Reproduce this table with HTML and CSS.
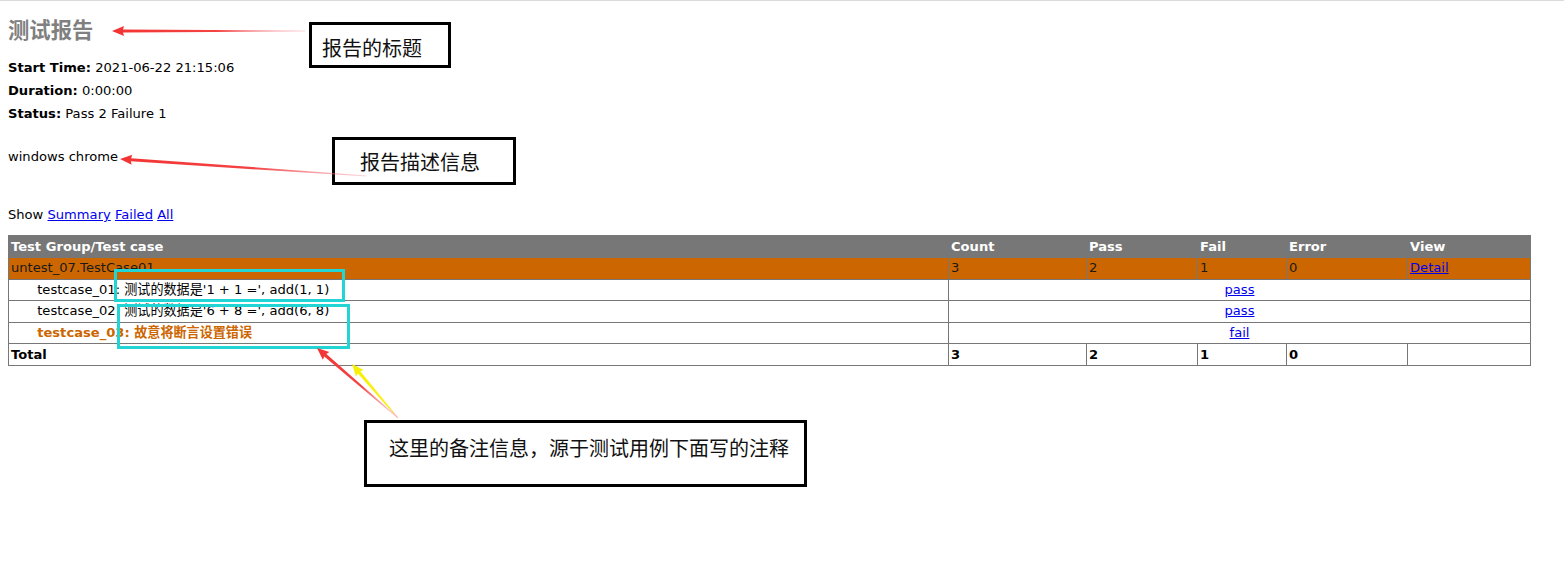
FILE: index.html
```html
<!DOCTYPE html>
<html lang="zh-CN">
<head>
<meta charset="utf-8">
<title>测试报告</title>
<link rel="stylesheet" href="styles.css">
</head>
<body>
<div class="heading">
  <h1>测试报告</h1>
  <p class="attribute"><strong>Start Time:</strong> 2021-06-22 21:15:06</p>
  <p class="attribute"><strong>Duration:</strong> 0:00:00</p>
  <p class="attribute"><strong>Status:</strong> Pass 2 Failure 1</p>
  <p class="description">windows chrome</p>
</div>
<p class="show-line">Show <a href="#">Summary</a> <a href="#">Failed</a> <a href="#">All</a></p>
<table class="result-table">
  <colgroup>
    <col class="col-name">
    <col class="col-count">
    <col class="col-pass">
    <col class="col-fail">
    <col class="col-error">
    <col class="col-view">
  </colgroup>
  <tr class="header-row"><td>Test Group/Test case</td><td>Count</td><td>Pass</td><td>Fail</td><td>Error</td><td>View</td></tr>
  <tr class="fail-class"><td>untest_07.TestCase01</td><td>3</td><td>2</td><td>1</td><td>0</td><td><a href="#">Detail</a></td></tr>
  <tr class="pass-case"><td><div class="testcase">testcase_01: 测试的数据是'1 + 1 =', add(1, 1)</div></td><td colspan="5" class="status"><a href="#">pass</a></td></tr>
  <tr class="pass-case"><td><div class="testcase">testcase_02: 测试的数据是'6 + 8 =', add(6, 8)</div></td><td colspan="5" class="status"><a href="#">pass</a></td></tr>
  <tr class="fail-case"><td><div class="testcase">testcase_03: 故意将断言设置错误</div></td><td colspan="5" class="status"><a href="#">fail</a></td></tr>
  <tr class="total-row"><td>Total</td><td>3</td><td>2</td><td>1</td><td>0</td><td>&nbsp;</td></tr>
</table>

<div class="note note-title">报告的标题</div>
<div class="note note-desc">报告描述信息</div>
<div class="note note-comment">这里的备注信息，源于测试用例下面写的注释</div>
<div class="mark mark-1"></div>
<div class="mark mark-2"></div>

<svg class="arrows" width="1564" height="577" viewBox="0 0 1564 577" xmlns="http://www.w3.org/2000/svg">
  <defs>
    <linearGradient id="redFade" x1="0" y1="0" x2="1" y2="0">
      <stop offset="0" stop-color="#f33333" stop-opacity="1"/>
      <stop offset="0.55" stop-color="#f33a3a" stop-opacity="0.95"/>
      <stop offset="1" stop-color="#f58a9a" stop-opacity="0.35"/>
    </linearGradient>
    <linearGradient id="yellowFade" x1="0" y1="0" x2="1" y2="0">
      <stop offset="0" stop-color="#f5f000" stop-opacity="1"/>
      <stop offset="0.8" stop-color="#f8f020" stop-opacity="1"/>
      <stop offset="1" stop-color="#f7a0a0" stop-opacity="0.6"/>
    </linearGradient>
  </defs>
  <g transform="translate(112,31)">
    <polygon fill="url(#redFade)" points="0,0 12,-5 11,-1.6 193,-0.5 193,0.5 11,1.6 12,5"/>
  </g>
  <g transform="translate(120,159) rotate(3.95)">
    <polygon fill="url(#redFade)" points="0,0 12,-5 11,-1.6 247,-0.5 247,0.5 11,1.6 12,5"/>
  </g>
  <g transform="translate(352,364) rotate(49.6)">
    <polygon fill="url(#yellowFade)" points="0,0 12,-5 11,-1.6 71,-0.5 71,0.5 11,1.6 12,5"/>
  </g>
  <g transform="translate(317,348) rotate(40.8)">
    <polygon fill="url(#redFade)" points="0,0 12,-5 11,-1.6 106,-0.5 106,0.5 11,1.6 12,5"/>
  </g>
</svg>
</body>
</html>
```

FILE: styles.css
```css
html {
  border-top: 1px solid #dadada;
}

body {
  margin: 0;
  padding: 8px;
  font-family: "DejaVu Sans", "Noto Sans CJK SC", sans-serif;
  font-size: 13.1px;
  line-height: 16px;
  color: #000;
  background: #fff;
}

a {
  color: #0000ee;
  text-decoration: underline;
}

h1 {
  margin: 10px 0 17px;
  font-size: 21.33px;
  line-height: 24px;
  font-weight: bold;
  color: #808080;
}

.attribute {
  margin: 7px 0 0;
}

.description {
  margin: 27px 0 0;
}

.show-line {
  margin: 42px 0 0;
}

.result-table {
  margin-top: 12px;
  width: 1522px;
  table-layout: fixed;
  border-collapse: collapse;
  border: 1px solid #777;
}

.col-name { width: 940px; }
.col-count { width: 138px; }
.col-pass { width: 111px; }
.col-fail { width: 89px; }
.col-error { width: 121px; }
.col-view { width: 123px; }

.result-table td {
  border: 1px solid #777;
  padding: 2px;
  line-height: 16px;
  height: 16.6px;
  white-space: nowrap;
}

.testcase {
  margin-left: 2em;
  height: 16.6px;
  overflow: visible;
}

.header-row td {
  background: #777;
  color: #fff;
  font-weight: bold;
  height: 17px;
}

.fail-class td {
  background: #c60;
  color: #1a1a1a;
}

.fail-case .testcase {
  color: #c60;
  font-weight: bold;
}

.status {
  text-align: center;
}

.total-row td {
  font-weight: bold;
}

.note {
  position: absolute;
  box-sizing: border-box;
  border: 3px solid #000;
  font-family: "Noto Sans CJK SC", sans-serif;
  font-size: 20px;
  line-height: 24px;
  color: #111;
  white-space: nowrap;
}

.note-title {
  left: 309px;
  top: 22px;
  width: 142px;
  height: 46px;
  padding: 11px 0 0 10px;
}

.note-desc {
  left: 332px;
  top: 137px;
  width: 184px;
  height: 48px;
  padding: 10px 0 0 25px;
}

.note-comment {
  left: 364px;
  top: 420px;
  width: 443px;
  height: 67px;
  padding: 13px 0 0 22px;
}

.mark {
  position: absolute;
  box-sizing: border-box;
  border: 3px solid #22d4d4;
}

.mark-1 {
  left: 114px;
  top: 269px;
  width: 231px;
  height: 33px;
}

.mark-2 {
  left: 117px;
  top: 304px;
  width: 233px;
  height: 45px;
}

.arrows {
  position: absolute;
  left: 0;
  top: 0;
  pointer-events: none;
}
```
